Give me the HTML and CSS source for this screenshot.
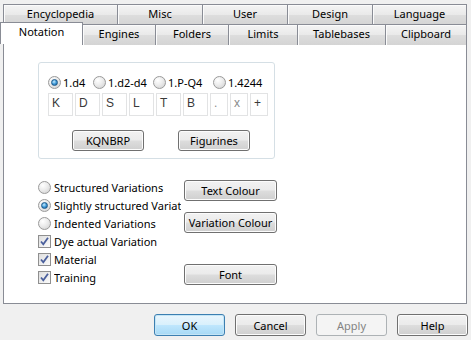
FILE: index.html
```html
<!DOCTYPE html>
<html>

<head>
    <title>Options - Notation</title>
    <link rel="stylesheet" href="styles.css">
</head>

<body>
    <div class="tabs">
        <div class="tab-row">
            <div class="tab ency">Encyclopedia</div>
            <div class="tab misc">Misc</div>
            <div class="tab user">User</div>
            <div class="tab design">Design</div>
            <div class="tab lang">Language</div>
        </div>
        <div class="tab-row lower">
            <div class="tab active">Notation</div>
            <div class="tab engines">Engines</div>
            <div class="tab folders">Folders</div>
            <div class="tab limits">Limits</div>
            <div class="tab tbases">Tablebases</div>
            <div class="tab clip">Clipboard</div>
        </div>
    </div>

    <div class="panel">
        <div class="group">
            <div class="notation-row">
                <div class="choice n1"><span class="radio on"></span>1.d4</div>
                <div class="choice n2"><span class="radio"></span>1.d2-d4</div>
                <div class="choice n3"><span class="radio"></span>1.P-Q4</div>
                <div class="choice n4"><span class="radio"></span>1.4244</div>
            </div>
            <div class="pieces">
                <span class="piece">K</span>
                <span class="piece">D</span>
                <span class="piece">S</span>
                <span class="piece">L</span>
                <span class="piece">T</span>
                <span class="piece">B</span>
                <span class="piece small light">.</span>
                <span class="piece small light">x</span>
                <span class="piece small">+</span>
            </div>
            <div class="group-buttons">
                <button class="btn">KQNBRP</button>
                <button class="btn">Figurines</button>
            </div>
        </div>

        <div class="options">
            <div class="opt-list">
                <div class="opt"><span class="radio"></span><span class="label">Structured Variations</span></div>
                <div class="opt"><span class="radio on"></span><span class="label">Slightly structured Variations</span></div>
                <div class="opt"><span class="radio"></span><span class="label">Indented Variations</span></div>
                <div class="opt"><span class="check"><svg width="11" height="11" viewBox="0 0 11 11"><path d="M2 5.5 L4.3 8.3 L9 1.8" fill="none" stroke="#4a5f9c" stroke-width="1.8"/></svg></span><span class="label">Dye actual Variation</span></div>
                <div class="opt"><span class="check"><svg width="11" height="11" viewBox="0 0 11 11"><path d="M2 5.5 L4.3 8.3 L9 1.8" fill="none" stroke="#4a5f9c" stroke-width="1.8"/></svg></span><span class="label">Material</span></div>
                <div class="opt"><span class="check"><svg width="11" height="11" viewBox="0 0 11 11"><path d="M2 5.5 L4.3 8.3 L9 1.8" fill="none" stroke="#4a5f9c" stroke-width="1.8"/></svg></span><span class="label">Training</span></div>
            </div>
            <div class="opt-buttons">
                <button class="btn wide first">Text Colour</button>
                <button class="btn wide second">Variation Colour</button>
                <button class="btn wide third">Font</button>
            </div>
        </div>
    </div>

    <div class="footer">
        <button class="btn dlg default">OK</button>
        <button class="btn dlg">Cancel</button>
        <button class="btn dlg disabled">Apply</button>
        <button class="btn dlg">Help</button>
    </div>
</body>

</html>
```

FILE: styles.css
```css
body {
    margin: 0;
    width: 471px;
    height: 340px;
    overflow: hidden;
    background: #f0f0f0;
    font-family: "Noto Sans", "Open Sans", sans-serif;
    font-size: 11px;
    color: #000;
}

/* tab strip */
.tabs {
    padding-top: 4px;
}

.tab-row {
    display: flex;
    height: 20px;
    padding-left: 3px;
}

.tab-row.lower {
    height: 18px;
    padding-left: 0;
}

.tab {
    box-sizing: border-box;
    height: 21px;
    margin-right: -1px;
    border: 1px solid #898c95;
    border-bottom: none;
    background: linear-gradient(#f4f4f4, #e9e9e9 50%, #dddddd 51%, #d4d4d4);
    box-shadow: inset 1px 1px 0 #fbfbfb;
    text-align: center;
    line-height: 17px;
    white-space: nowrap;
}

.ency { width: 115px; }
.misc, .user, .design { width: 86px; }
.lang { width: 95px; }
.engines, .folders { width: 74px; }
.limits { width: 70px; }
.tbases { width: 89px; }
.clip { width: 82px; }

.tab.active {
    position: relative;
    z-index: 2;
    width: 83px;
    height: 22px;
    margin-top: -2px;
    background: #fff;
    box-shadow: none;
    line-height: 18px;
}

/* page */
.panel {
    box-sizing: border-box;
    width: 464px;
    height: 262px;
    margin-left: 3px;
    background: #fff;
    border: 1px solid #898c95;
    padding: 19px 0 0 34px;
}

.group {
    box-sizing: border-box;
    width: 237px;
    height: 97px;
    border: 1px solid #d5dfe5;
    border-radius: 3px;
    padding: 13px 0 0 9px;
}

.notation-row {
    display: flex;
    height: 13px;
    line-height: 13px;
}

.choice {
    display: flex;
    align-items: center;
    white-space: nowrap;
}

.n1 { width: 45px; }
.n2, .n3 { width: 60px; }

.choice .radio {
    margin-right: 2px;
}

.radio {
    position: relative;
    flex: none;
    box-sizing: border-box;
    width: 13px;
    height: 13px;
    border: 1px solid #9a9a9a;
    border-radius: 50%;
    background: radial-gradient(circle at 35% 30%, #ffffff 0, #ececec 45%, #cdcdcd 100%);
}

.radio.on::after {
    content: '';
    position: absolute;
    left: 2px;
    top: 2px;
    box-sizing: border-box;
    width: 7px;
    height: 7px;
    border-radius: 50%;
    border: 1px solid #1f5a8a;
    background: radial-gradient(circle at 40% 35%, #c8ecff 0, #3f9ad8 50%, #125591 100%);
}

.pieces {
    display: flex;
    gap: 2px;
    margin-top: 4px;
}

.piece {
    box-sizing: border-box;
    width: 25px;
    height: 23px;
    border: 1px solid #e2e3e4;
    padding: 2px 0 0 3px;
    font-family: "Liberation Sans", Arial, sans-serif;
    font-size: 12px;
    color: #3a3a3a;
}

.piece.small {
    width: 18px;
}

.piece.light {
    color: #8a8a8a;
}

.group-buttons {
    display: flex;
    gap: 34px;
    margin-top: 14px;
    padding-left: 24px;
}

/* buttons */
.btn {
    box-sizing: border-box;
    width: 72px;
    height: 21px;
    padding: 0;
    border: 1px solid #707070;
    border-radius: 3px;
    background: linear-gradient(#f2f2f2, #ebebeb 48%, #dddddd 52%, #cfcfcf);
    box-shadow: inset 0 0 0 1px #fcfcfc;
    font: inherit;
    color: #000;
    white-space: nowrap;
}

.btn.wide {
    width: 93px;
}

/* options below the group */
.options {
    display: flex;
    margin-top: 19px;
}

.opt-list {
    width: 146px;
}

.opt {
    display: flex;
    align-items: center;
    height: 18px;
}

.opt .radio,
.opt .check {
    margin-right: 3px;
}

.label {
    width: 127px;
    overflow: hidden;
    white-space: nowrap;
}

.check {
    flex: none;
    display: flex;
    align-items: center;
    justify-content: center;
    box-sizing: border-box;
    width: 13px;
    height: 13px;
    border: 1px solid #8f8f8f;
    background: linear-gradient(135deg, #dedede, #fbfbfb);
}

.opt-buttons {
    display: flex;
    flex-direction: column;
}

.btn.first { margin-top: 2px; }
.btn.second { margin-top: 11px; }
.btn.third { margin-top: 31px; }

/* dialog buttons */
.footer {
    display: flex;
    gap: 10px;
    padding: 10px 0 0 154px;
}

.btn.dlg {
    width: 71px;
    height: 22px;
}

.btn.default {
    border-color: #3c7fb1;
    background: linear-gradient(#eaf6fd, #d9f0fc 48%, #bee6fd 52%, #a7d9f5);
    box-shadow: inset 0 0 0 1px #c4e5f6;
}

.btn.disabled {
    border-color: #adb2b5;
    background: #f4f4f4;
    box-shadow: none;
    color: #838383;
}
```
